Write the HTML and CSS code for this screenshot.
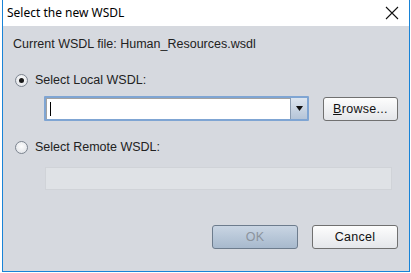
FILE: index.html
```html
<!DOCTYPE html>
<html lang="en">

<head>
    <meta charset="UTF-8">
    <meta name="viewport" content="width=device-width, initial-scale=1.0">
    <title>Select the new WSDL</title>
    <link rel="stylesheet" href="styles.css">
</head>

<body>

    <div class="window">
        <div class="titlebar">
            <span class="title">Select the new WSDL</span>
            <svg class="close" width="14" height="14" viewBox="0 0 14 14">
                <path d="M1 1 L13 13 M13 1 L1 13" stroke="#111" stroke-width="1.1" fill="none" />
            </svg>
        </div>

        <div class="content">
            <p class="current">Current WSDL file: Human_Resources.wsdl</p>

            <label class="choice">
                <span class="radio checked"></span>
                Select Local WSDL:
            </label>
            <div class="local-row">
                <div class="combo">
                    <div class="combo-input"><span class="caret"></span></div>
                    <div class="combo-arrow">
                        <svg width="7" height="5" viewBox="0 0 7 5">
                            <path d="M0 0 L7 0 L3.5 5 Z" fill="#111" />
                        </svg>
                    </div>
                </div>
                <button class="btn browse"><u>B</u>rowse...</button>
            </div>

            <label class="choice remote">
                <span class="radio"></span>
                Select Remote WSDL:
            </label>
            <div class="remote-field"></div>

            <div class="actions">
                <button class="btn ok" disabled>OK</button>
                <button class="btn cancel">Cancel</button>
            </div>
        </div>
    </div>

</body>

</html>
```

FILE: styles.css
```css
body {
    margin: 0;
    background: #fff;
    font-family: 'Liberation Sans', Arial, sans-serif;
    font-size: 12px;
    color: #222;
}

p {
    margin: 0;
    padding: 0;
}

.window {
    margin-left: 2px;
    width: 406px;
    height: 271px;
    border: 1px solid #1883d7;
    border-top: none;
    display: flex;
    flex-direction: column;
}

.titlebar {
    height: 26px;
    background: #fff;
    display: flex;
    align-items: center;
    justify-content: space-between;
    padding: 0 10px 0 4px;
    font-family: 'Noto Sans', 'Open Sans', sans-serif;
    font-size: 12px;
    color: #000;
}

.titlebar .title {
    margin-top: -2px;
}

.close {
    margin-top: -1px;
}

.content {
    flex: 1;
    background: #d6d9df;
    padding: 11px 11px 0 10px;
}

.current {
    line-height: 14px;
    font-size: 12.5px;
}

.choice {
    display: flex;
    align-items: center;
    gap: 7px;
    margin-top: 22px;
    margin-left: 2px;
    line-height: 14px;
    font-size: 12.5px;
}

.choice.remote {
    margin-top: 19px;
}

.radio {
    width: 11px;
    height: 11px;
    border-radius: 50%;
    border: 1px solid #7d8590;
    background: radial-gradient(circle at 50% 40%, #fdfdfd, #dcdfe4);
    display: flex;
    justify-content: center;
    align-items: center;
}

.radio.checked::after {
    content: "";
    width: 5px;
    height: 5px;
    border-radius: 50%;
    background: #1a1a1a;
}

.local-row {
    display: flex;
    align-items: center;
    gap: 14px;
    margin-top: 9px;
    margin-left: 31px;
}

.combo {
    width: 265px;
    height: 25px;
    box-sizing: border-box;
    display: flex;
    border: 2px solid #7fa5d3;
    border-radius: 1px;
}

.combo-input {
    flex: 1;
    background: #fff;
    border-top: 1px solid #a2a2a2;
    border-left: 1px solid #a2a2a2;
    display: flex;
    align-items: center;
    padding-left: 3px;
}

.caret {
    width: 1px;
    height: 14px;
    background: #000;
}

.combo-arrow {
    width: 16px;
    background: linear-gradient(#dde5ef, #b5c5d8);
    border-left: 1px solid #8a9bb0;
    display: flex;
    justify-content: center;
    align-items: center;
}

.btn {
    font-family: 'Liberation Sans', Arial, sans-serif;
    font-size: 12.5px;
    color: #111;
    height: 24px;
    border: 1px solid #707070;
    border-radius: 3px;
    background: linear-gradient(#fdfdfd, #e4e6ea);
    padding: 0;
    letter-spacing: 0.3px;
}

.browse {
    width: 75px;
}

.remote-field {
    width: 347px;
    height: 23px;
    box-sizing: border-box;
    margin-top: 13px;
    margin-left: 32px;
    background: #dfe2e6;
    border: 1px solid #d0d3d8;
}

.actions {
    display: flex;
    justify-content: flex-end;
    gap: 14px;
    margin-top: 35px;
}

.actions .btn {
    width: 86px;
}

.ok {
    background: linear-gradient(#c9d5e3, #a7b9cd);
    border-color: #6d7c8d;
    color: #8b939d;
}
```
